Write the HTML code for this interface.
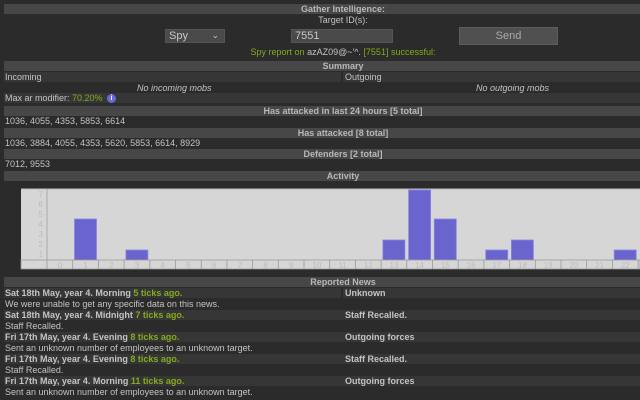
<!DOCTYPE html>
<html><head><style>
*{margin:0;padding:0;box-sizing:border-box}
body{width:640px;height:400px;background:#2b2b2b;font-family:"Liberation Sans",sans-serif;font-size:9px;color:#c4c4c4;position:relative;overflow:hidden}
.a{position:absolute;white-space:nowrap}
.h{position:absolute;left:4px;width:678px;height:10px;background:#474747;color:#b8b8b8;font-weight:bold;text-align:center;line-height:10px}
.r{position:absolute;left:4px;width:640px;height:10px;background:#363636;line-height:10px}
.g{color:#82ab1c}
.b{font-weight:bold}
.c{position:absolute;left:4px;width:678px;text-align:center;line-height:10px;white-space:nowrap}
</style></head><body>
<div class="h" style="top:4px">Gather Intelligence:</div>
<div class="c" style="top:15px">Target ID(s):</div>
<div class="a" style="left:165px;top:29px;width:60px;height:14px;background:#4a4a4a;border:1px solid #555;color:#c8c8c8;font-size:11px;line-height:12px;padding-left:3px">Spy<span style="position:absolute;right:5px;top:-1px;font-size:9px">&#8964;</span></div>
<div class="a" style="left:291px;top:29px;width:102px;height:14px;background:#4a4a4a;border:1px solid #555;color:#c8c8c8;font-size:11px;line-height:12px;padding-left:3px">7551</div>
<div class="a" style="left:459px;top:27px;width:99px;height:18px;background:#505050;border:1px solid #5c5c5c;color:#aaa;font-size:11px;line-height:16px;text-align:center">Send</div>
<div class="c g" style="top:47px">Spy report on <span style="color:#c4c4c4">azAZ09@~'^.</span> [7551] successful:</div>
<div class="h" style="top:61px">Summary</div>
<div class="r" style="top:72px;padding-left:1px">Incoming</div>
<div class="a" style="left:341px;top:72px;width:2px;height:10px;background:#2b2b2b"></div>
<div class="a" style="left:345px;top:72px;line-height:10px">Outgoing</div>
<div class="a" style="left:137px;top:83px;line-height:10px;font-style:italic">No incoming mobs</div>
<div class="a" style="left:476px;top:83px;line-height:10px;font-style:italic">No outgoing mobs</div>
<div class="r" style="top:93px;padding-left:1px">Max ar modifier: <span class="g">70.20%</span></div>
<div class="a" style="left:107px;top:94px;width:9px;height:9px;border-radius:50%;background:#6a6ad6;color:#fff;font-size:7px;line-height:9px;text-align:center;font-weight:bold">i</div>
<div class="h" style="top:106px">Has attacked in last 24 hours [5 total]</div>
<div class="a" style="left:5px;top:116px;line-height:10px">1036, 4055, 4353, 5853, 6614</div>
<div class="h" style="top:128px">Has attacked [8 total]</div>
<div class="a" style="left:5px;top:138px;line-height:10px">1036, 3884, 4055, 4353, 5620, 5853, 6614, 8929</div>
<div class="h" style="top:149px">Defenders [2 total]</div>
<div class="a" style="left:5px;top:159px;line-height:10px">7012, 9553</div>
<div class="h" style="top:171px">Activity</div>
<svg class="a" style="left:0;top:0" width="640" height="400">
<rect x="21" y="189" width="619" height="80" fill="#d6d6d6"/>
<line x1="47" y1="189" x2="47" y2="269" stroke="#aaa"/>
<line x1="21" y1="189" x2="640" y2="189" stroke="#bbb"/>
<g fill="#bcbcbc" font-size="8" font-family="Liberation Sans" text-anchor="end">
<text x="43" y="197">7</text><text x="43" y="207">6</text><text x="43" y="217">5</text><text x="43" y="227">4</text><text x="43" y="237">3</text><text x="43" y="247">2</text><text x="43" y="257">1</text>
</g>
<g fill="#6a64cf" stroke="#8a86e0" stroke-width="0.8">
<rect x="74.5" y="219" width="22" height="41"/>
<rect x="125.9" y="250" width="22" height="10"/>
<rect x="382.9" y="240" width="22" height="20"/>
<rect x="408.6" y="190" width="22" height="70"/>
<rect x="434.3" y="219" width="22" height="41"/>
<rect x="485.7" y="250" width="22" height="10"/>
<rect x="511.4" y="240" width="22" height="20"/>
<rect x="614.2" y="250" width="22" height="10"/>
</g>
<rect x="21" y="260" width="619" height="9" fill="#d6d6d6" stroke="#999" stroke-width="0.8"/>
<g stroke="#999" stroke-width="0.8" id="t">
<line x1="47" y1="260" x2="47" y2="269"/><line x1="72.7" y1="260" x2="72.7" y2="269"/><line x1="98.4" y1="260" x2="98.4" y2="269"/><line x1="124.1" y1="260" x2="124.1" y2="269"/><line x1="149.8" y1="260" x2="149.8" y2="269"/><line x1="175.5" y1="260" x2="175.5" y2="269"/><line x1="201.2" y1="260" x2="201.2" y2="269"/><line x1="226.9" y1="260" x2="226.9" y2="269"/><line x1="252.6" y1="260" x2="252.6" y2="269"/><line x1="278.3" y1="260" x2="278.3" y2="269"/><line x1="304" y1="260" x2="304" y2="269"/><line x1="329.7" y1="260" x2="329.7" y2="269"/><line x1="355.4" y1="260" x2="355.4" y2="269"/><line x1="381.1" y1="260" x2="381.1" y2="269"/><line x1="406.8" y1="260" x2="406.8" y2="269"/><line x1="432.5" y1="260" x2="432.5" y2="269"/><line x1="458.2" y1="260" x2="458.2" y2="269"/><line x1="483.9" y1="260" x2="483.9" y2="269"/><line x1="509.6" y1="260" x2="509.6" y2="269"/><line x1="535.3" y1="260" x2="535.3" y2="269"/><line x1="561" y1="260" x2="561" y2="269"/><line x1="586.7" y1="260" x2="586.7" y2="269"/><line x1="612.4" y1="260" x2="612.4" y2="269"/><line x1="638.1" y1="260" x2="638.1" y2="269"/>
</g>
<g fill="#bcbcbc" font-size="8" font-family="Liberation Sans" text-anchor="middle">
<text x="59.9" y="268">0</text><text x="85.6" y="268">1</text><text x="111.3" y="268">2</text><text x="137" y="268">3</text><text x="162.7" y="268">4</text><text x="188.4" y="268">5</text><text x="214.1" y="268">6</text><text x="239.8" y="268">7</text><text x="265.5" y="268">8</text><text x="291.2" y="268">9</text><text x="316.9" y="268">10</text><text x="342.6" y="268">11</text><text x="368.3" y="268">12</text><text x="394" y="268">13</text><text x="419.7" y="268">14</text><text x="445.4" y="268">15</text><text x="471.1" y="268">16</text><text x="496.8" y="268">17</text><text x="522.5" y="268">18</text><text x="548.2" y="268">19</text><text x="573.9" y="268">20</text><text x="599.6" y="268">21</text><text x="625.3" y="268">22</text>
</g>
</svg>
<div class="h" style="top:277px">Reported News</div>
<div class="r b" style="top:288px;padding-left:1px">Sat 18th May, year 4. Morning <span class="g">5 ticks ago.</span></div>
<div class="a" style="left:341px;top:288px;width:2px;height:100px;background:#2b2b2b"></div>
<div class="a b" style="left:345px;top:288px;line-height:10px">Unknown</div>
<div class="a" style="left:5px;top:299px;line-height:10px">We were unable to get any specific data on this news.</div>
<div class="r b" style="top:310px;padding-left:1px">Sat 18th May, year 4. Midnight <span class="g">7 ticks ago.</span></div>
<div class="a b" style="left:345px;top:310px;line-height:10px">Staff Recalled.</div>
<div class="a" style="left:5px;top:321px;line-height:10px">Staff Recalled.</div>
<div class="r b" style="top:332px;padding-left:1px">Fri 17th May, year 4. Evening <span class="g">8 ticks ago.</span></div>
<div class="a b" style="left:345px;top:332px;line-height:10px">Outgoing forces</div>
<div class="a" style="left:5px;top:343px;line-height:10px">Sent an unknown number of employees to an unknown target.</div>
<div class="r b" style="top:354px;padding-left:1px">Fri 17th May, year 4. Evening <span class="g">8 ticks ago.</span></div>
<div class="a b" style="left:345px;top:354px;line-height:10px">Staff Recalled.</div>
<div class="a" style="left:5px;top:365px;line-height:10px">Staff Recalled.</div>
<div class="r b" style="top:376px;padding-left:1px">Fri 17th May, year 4. Morning <span class="g">11 ticks ago.</span></div>
<div class="a b" style="left:345px;top:376px;line-height:10px">Outgoing forces</div>
<div class="a" style="left:5px;top:387px;line-height:10px">Sent an unknown number of employees to an unknown target.</div>
</body></html>
